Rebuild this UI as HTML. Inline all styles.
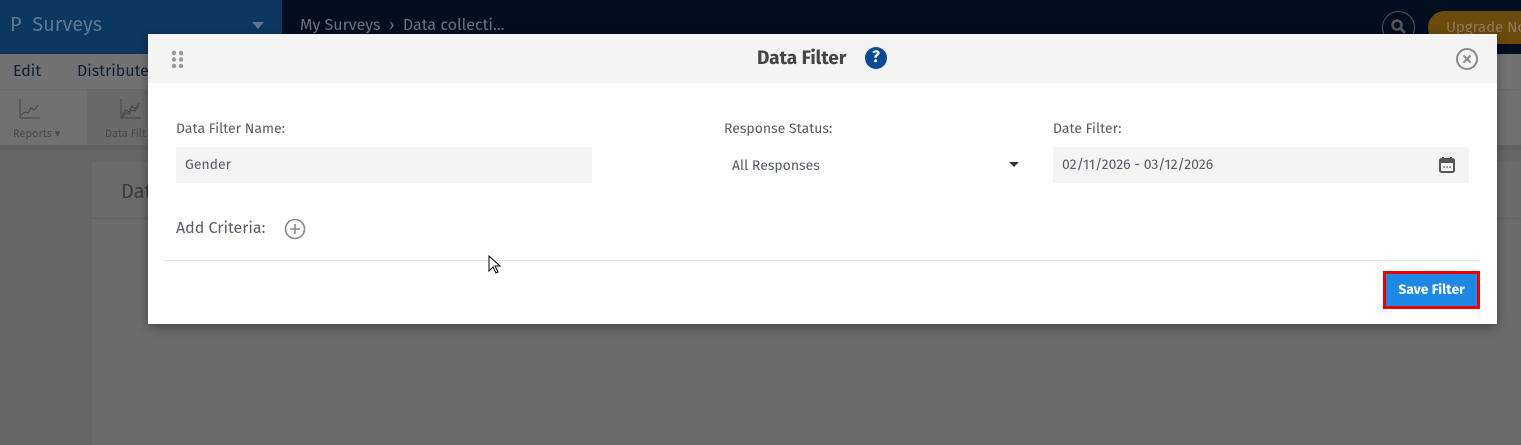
<!DOCTYPE html>
<html><head><style>
*{margin:0;padding:0;box-sizing:border-box}
body{width:1521px;height:445px;overflow:hidden;background:#666;font-family:"Fira Sans","Liberation Sans",sans-serif;position:relative;font-size:14px}
.a{position:absolute}
</style></head><body>
<div class="a" style="left:0;top:0;width:282px;height:54px;background:#0b3760"></div>
<div class="a" style="left:282px;top:0;width:1239px;height:54px;background:#020d1f"></div>
<div class="a" style="left:10px;top:13px;color:#5d7793;font-size:20px">P&nbsp; Surveys</div>
<div class="a" style="left:252px;top:22px;border-left:6px solid transparent;border-right:6px solid transparent;border-top:7px solid #5d7793"></div>
<div class="a" style="left:300px;top:16px;color:#6c737c;font-size:16px">My Surveys &nbsp;›&nbsp; Data collecti...</div>
<div class="a" style="left:1382px;top:11px;width:33px;height:33px;border:1px solid #555;border-radius:50%"></div>
<svg class="a" style="left:1390px;top:18px" width="18" height="18"><circle cx="7" cy="7" r="4.5" fill="none" stroke="#555" stroke-width="2.5"/><path d="M10 10l5 5" stroke="#555" stroke-width="3"/></svg>
<div class="a" style="left:1428px;top:11px;width:110px;height:33px;background:#6b4a0c;border-radius:17px;color:#8f7d5c;font-size:15px;padding:7px 0 0 18px">Upgrade Now</div>
<div class="a" style="left:0;top:54px;width:1521px;height:36px;background:#727272;border-bottom:1px solid #686868"></div>
<div class="a" style="left:13px;top:62px;color:#0f1f33;font-size:16px">Edit</div>
<div class="a" style="left:77px;top:62px;color:#0f1f33;font-size:16px">Distribute</div>
<div class="a" style="left:0;top:90px;width:1521px;height:55px;background:#707070"></div>
<div class="a" style="left:87px;top:90px;width:70px;height:55px;background:#6a6a6a"></div>
<svg class="a" style="left:18px;top:98px" width="24" height="22"><path d="M2 1v19h20M3 17l4-3 3 1 3-5 3 2 4-5" fill="none" stroke="#444" stroke-width="1"/></svg>
<svg class="a" style="left:119px;top:98px" width="24" height="22"><path d="M2 1v19h20M3 17l4-5 3 2 3-6 3 3 4-6M3 19l4-4 3 1 3-4 3 1 4-5" fill="none" stroke="#444" stroke-width="1"/></svg>
<div class="a" style="left:13px;top:127px;color:#4a4a4a;font-size:11px">Reports ▾</div>
<div class="a" style="left:105px;top:127px;color:#4a4a4a;font-size:11px">Data Filt</div>
<div class="a" style="left:0;top:145px;width:1521px;height:5px;background:#626262"></div>
<div class="a" style="left:92px;top:162px;width:1429px;height:283px;background:#6b6b6b"></div>
<div class="a" style="left:92px;top:218px;width:1429px;height:1px;background:#626262"></div>
<div class="a" style="left:121px;top:180px;color:#3a3a3a;font-size:20px">Dat</div>

<div class="a" style="left:148px;top:34px;width:1349px;height:290px;background:#fff;box-shadow:0 3px 10px rgba(0,0,0,.35)">
 <div class="a" style="left:0;top:0;width:1349px;height:49px;background:#f4f4f4"></div>
 <svg class="a" style="left:23px;top:16px" width="14" height="20"><g fill="#999"><circle cx="3" cy="3" r="2.2"/><circle cx="10" cy="3" r="2.2"/><circle cx="3" cy="9.5" r="2.2"/><circle cx="10" cy="9.5" r="2.2"/><circle cx="3" cy="16" r="2.2"/><circle cx="10" cy="16" r="2.2"/></g></svg>
 <div class="a" style="left:609px;top:13px;font-size:19px;font-weight:bold;color:#444">Data Filter</div>
 <div class="a" style="left:717px;top:13px;width:22px;height:22px;border-radius:50%;background:#0d4a94;color:#fff;font-weight:bold;font-size:16px;text-align:center;line-height:22px">?</div>
 <svg class="a" style="left:1307px;top:13px" width="24" height="24"><circle cx="12" cy="12" r="10" fill="none" stroke="#8a8a8a" stroke-width="2"/><path d="M8.5 8.5l7 7M15.5 8.5l-7 7" stroke="#8a8a8a" stroke-width="2"/></svg>
 <div class="a" style="left:28px;top:86px;color:#555c66">Data Filter Name:</div>
 <div class="a" style="left:28px;top:113px;width:416px;height:36px;background:#f4f4f4;color:#555c66;padding:9px 0 0 9px">Gender</div>
 <div class="a" style="left:576px;top:86px;color:#555c66">Response Status:</div>
 <div class="a" style="left:584px;top:123px;color:#555c66">All Responses</div>
 <div class="a" style="left:861px;top:128px;border-left:5px solid transparent;border-right:5px solid transparent;border-top:5px solid #333"></div>
 <div class="a" style="left:905px;top:86px;color:#555c66">Date Filter:</div>
 <div class="a" style="left:905px;top:113px;width:416px;height:36px;background:#f4f4f4;color:#555c66;padding:9px 0 0 9px">02/11/2026 - 03/12/2026</div>
 <svg class="a" style="left:1291px;top:122px" width="16" height="17"><rect x="1" y="3" width="14" height="13" rx="1.5" fill="none" stroke="#555" stroke-width="2"/><rect x="1" y="3" width="14" height="4" fill="#555"/><path d="M4 1v3M12 1v3" stroke="#555" stroke-width="2"/><path d="M4 11h2M7 11h2M10 11h2" stroke="#555"/></svg>
 <div class="a" style="left:28px;top:185px;color:#555c66;font-size:16px">Add Criteria:</div>
 <svg class="a" style="left:136px;top:184px" width="22" height="22"><circle cx="11" cy="11" r="9.5" fill="none" stroke="#888" stroke-width="1.6"/><path d="M11 6v10M6 11h10" stroke="#888" stroke-width="1.6"/></svg>
 <div class="a" style="left:16px;top:226px;width:1316px;height:1px;background:#e2e2e2"></div>
 <div class="a" style="left:1235px;top:237px;width:97px;height:38px;border:3px solid #e00;background:#1e88e5;color:#fff;font-weight:bold;font-size:14px;text-align:center;line-height:32px">Save Filter</div>
</div>
<svg class="a" style="left:488px;top:255px" width="14" height="20"><path d="M1 1v15l4-4 3 6 2-1-3-6h5z" fill="#fff" stroke="#000"/></svg>
</body></html>
